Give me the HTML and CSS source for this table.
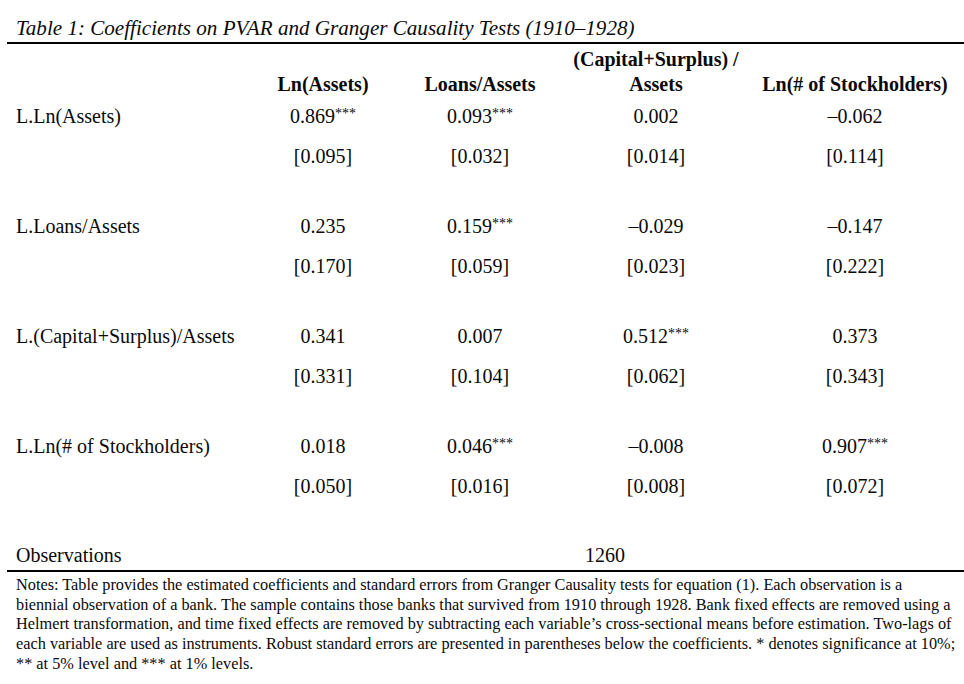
FILE: index.html
```
<!DOCTYPE html>
<html lang="en">
<head>
<meta charset="utf-8">
<title>Table 1</title>
<link rel="stylesheet" href="styles.css">
</head>
<body>
<div class="page">
  <div class="caption">Table 1: Coefficients on PVAR and Granger Causality Tests (1910–1928)</div>
  <div class="table">
    <div class="row head">
      <div class="label"></div>
      <div class="cell">Ln(Assets)</div>
      <div class="cell">Loans/Assets</div>
      <div class="cell">(Capital+Surplus) /<br>Assets</div>
      <div class="cell">Ln(# of Stockholders)</div>
    </div>

    <div class="block">
      <div class="row">
        <div class="label">L.Ln(Assets)</div>
        <div class="cell">0.869<span class="sig">***</span></div>
        <div class="cell">0.093<span class="sig">***</span></div>
        <div class="cell">0.002</div>
        <div class="cell">–0.062</div>
      </div>
      <div class="row">
        <div class="label"></div>
        <div class="cell">[0.095]</div>
        <div class="cell">[0.032]</div>
        <div class="cell">[0.014]</div>
        <div class="cell">[0.114]</div>
      </div>
    </div>

    <div class="block">
      <div class="row">
        <div class="label">L.Loans/Assets</div>
        <div class="cell">0.235</div>
        <div class="cell">0.159<span class="sig">***</span></div>
        <div class="cell">–0.029</div>
        <div class="cell">–0.147</div>
      </div>
      <div class="row">
        <div class="label"></div>
        <div class="cell">[0.170]</div>
        <div class="cell">[0.059]</div>
        <div class="cell">[0.023]</div>
        <div class="cell">[0.222]</div>
      </div>
    </div>

    <div class="block">
      <div class="row">
        <div class="label">L.(Capital+Surplus)/Assets</div>
        <div class="cell">0.341</div>
        <div class="cell">0.007</div>
        <div class="cell">0.512<span class="sig">***</span></div>
        <div class="cell">0.373</div>
      </div>
      <div class="row">
        <div class="label"></div>
        <div class="cell">[0.331]</div>
        <div class="cell">[0.104]</div>
        <div class="cell">[0.062]</div>
        <div class="cell">[0.343]</div>
      </div>
    </div>

    <div class="block last">
      <div class="row">
        <div class="label">L.Ln(# of Stockholders)</div>
        <div class="cell">0.018</div>
        <div class="cell">0.046<span class="sig">***</span></div>
        <div class="cell">–0.008</div>
        <div class="cell">0.907<span class="sig">***</span></div>
      </div>
      <div class="row">
        <div class="label"></div>
        <div class="cell">[0.050]</div>
        <div class="cell">[0.016]</div>
        <div class="cell">[0.008]</div>
        <div class="cell">[0.072]</div>
      </div>
    </div>

    <div class="row obs">
      <div class="label">Observations</div>
      <div class="cell span">1260</div>
    </div>
  </div>
  <div class="notes">Notes: Table provides the estimated coefficients and standard errors from Granger Causality tests for equation (1). Each observation is a<br>biennial observation of a bank. The sample contains those banks that survived from 1910 through 1928. Bank fixed effects are removed using a<br>Helmert transformation, and time fixed effects are removed by subtracting each variable’s cross-sectional means before estimation. Two-lags of<br>each variable are used as instruments. Robust standard errors are presented in parentheses below the coefficients. * denotes significance at 10%;<br>** at 5% level and *** at 1% levels.</div>
</div>
</body>
</html>
```

FILE: styles.css
```
html, body {
  margin: 0;
  padding: 0;
  background: #ffffff;
}

body {
  font-family: "Liberation Serif", "Times New Roman", serif;
  color: #0a0a0a;
}

.page {
  width: 964px;
  height: 684px;
  overflow: hidden;
}

.caption {
  margin-left: 7px;
  padding: 16px 0 2px 9px;
  font-size: 21.1px;
  line-height: 24px;
  font-style: italic;
  border-bottom: 2px solid #000;
}

.table {
  margin-left: 7px;
  border-bottom: 2px solid #000;
}

.row {
  display: grid;
  grid-template-columns: 238px 156px 158px 194px 204px;
  font-size: 20px;
  line-height: 40px;
}

.row .label {
  padding-left: 9px;
  white-space: nowrap;
}

.row .cell {
  text-align: center;
  white-space: nowrap;
}

.head {
  padding-top: 3px;
  line-height: 24.5px;
  font-weight: bold;
  align-items: end;
}

.block {
  margin-bottom: 30px;
}

.block.last {
  margin-bottom: 34px;
}

.obs {
  line-height: 30px;
}

.obs .span {
  grid-column: 2 / span 4;
  padding-left: 8px;
}

.sig {
  font-size: 14px;
  vertical-align: 5px;
  line-height: 0;
}

.notes {
  padding: 3px 0 0 16px;
  font-size: 16.3px;
  line-height: 19.7px;
  white-space: nowrap;
}
```
